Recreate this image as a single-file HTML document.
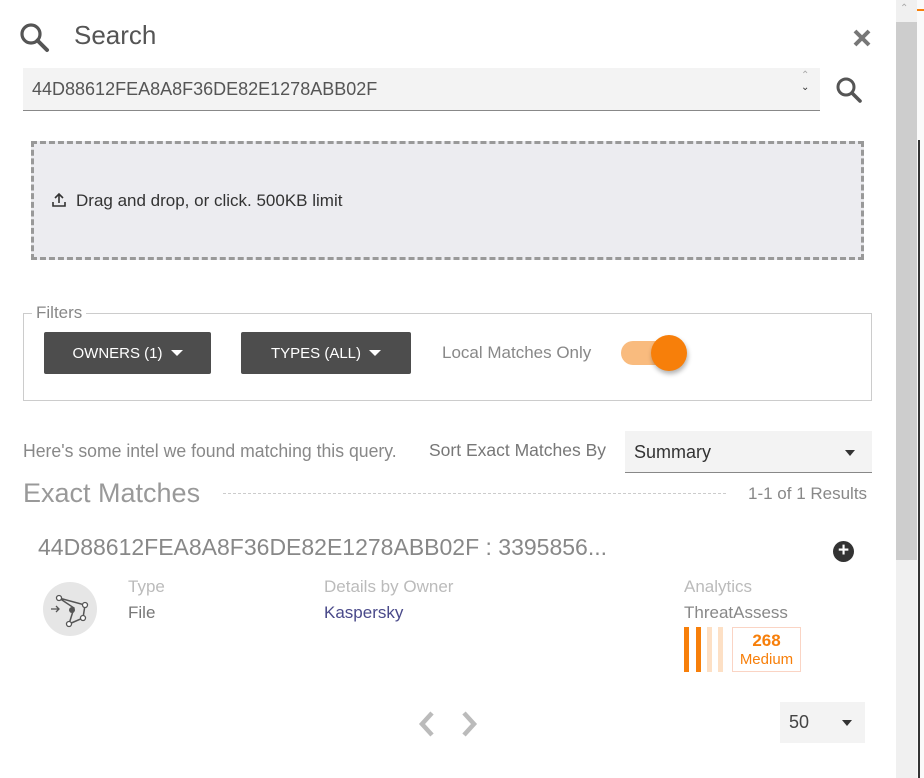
<!DOCTYPE html>
<html><head><meta charset="utf-8"><style>
*{box-sizing:border-box;margin:0;padding:0}
body{width:924px;height:778px;background:#fff;font-family:"Liberation Sans",sans-serif;position:relative;overflow:hidden;color:#555}
.a{position:absolute;white-space:nowrap}
.btn{position:absolute;background:#4d4d4d;color:#fff;font-size:15px;border-radius:2px;display:flex;align-items:center;justify-content:center;gap:8px}
.tri{width:0;height:0;border-left:6px solid transparent;border-right:6px solid transparent;border-top:6px solid currentColor;display:inline-block}
</style></head><body>
<svg class="a" style="left:18px;top:21px" width="34" height="32" viewBox="0 0 34 32"><circle cx="13" cy="13" r="9" fill="none" stroke="#555" stroke-width="3.2"/><line x1="19.5" y1="19.5" x2="29" y2="29" stroke="#555" stroke-width="4" stroke-linecap="round"/></svg>
<div class="a" style="left:74px;top:20px;font-size:26px;color:#555">Search</div>
<svg class="a" style="left:852px;top:28px" width="20" height="20" viewBox="0 0 20 20"><path d="M3 3L17 17M17 3L3 17" stroke="#777" stroke-width="4"/></svg>
<div class="a" style="left:23px;top:68px;width:797px;height:43px;background:#f3f3f3;border-bottom:1px solid #888"></div>
<div class="a" style="left:32px;top:79px;font-size:18px;color:#555">44D88612FEA8A8F36DE82E1278ABB02F</div>
<div class="a" style="left:801px;top:70px;font-size:10px;color:#aaa;line-height:12px">&#8963;<br><span style="color:#333">&#8964;</span></div>
<svg class="a" style="left:834px;top:75px" width="30" height="30" viewBox="0 0 30 30"><circle cx="12" cy="12" r="8" fill="none" stroke="#555" stroke-width="3"/><line x1="18" y1="18" x2="26" y2="26" stroke="#555" stroke-width="3.6" stroke-linecap="round"/></svg>
<div class="a" style="left:31px;top:141px;width:833px;height:119px;border:3px dashed #999;background:#ececf0"></div>
<svg class="a" style="left:51px;top:192px" width="16" height="16" viewBox="0 0 16 16"><path d="M8 11V2M4 6l4-4 4 4M2 10v4h12v-4" fill="none" stroke="#333" stroke-width="1.6"/></svg>
<div class="a" style="left:76px;top:191px;font-size:17px;color:#333">Drag and drop, or click. 500KB limit</div>
<div class="a" style="left:23px;top:313px;width:849px;height:88px;border:1px solid #ccc"></div>
<div class="a" style="left:32px;top:303px;padding:0 4px;background:#fff;font-size:17px;color:#888">Filters</div>
<div class="btn" style="left:44px;top:332px;width:167px;height:42px">OWNERS (1) <span class="tri"></span></div>
<div class="btn" style="left:241px;top:332px;width:170px;height:42px">TYPES (ALL) <span class="tri"></span></div>
<div class="a" style="left:442px;top:343px;font-size:17px;color:#888">Local Matches Only</div>
<div class="a" style="left:621px;top:341px;width:46px;height:24px;border-radius:12px;background:#f9bb7e"></div>
<div class="a" style="left:651px;top:335px;width:36px;height:36px;border-radius:50%;background:#f77f0a;box-shadow:1px 3px 5px rgba(0,0,0,.3)"></div>
<div class="a" style="left:23px;top:441px;font-size:18px;color:#888;transform:scaleX(0.98);transform-origin:left">Here's some intel we found matching this query.</div>
<div class="a" style="left:429px;top:440px;font-size:17.5px;color:#777">Sort Exact Matches By</div>
<div class="a" style="left:625px;top:431px;width:247px;height:42px;background:#f3f3f3;border-bottom:1px solid #888"></div>
<div class="a" style="left:634px;top:442px;font-size:18px;color:#333">Summary</div>
<span class="a tri" style="left:845px;top:450px;color:#333;border-left-width:5px;border-right-width:5px"></span>
<div class="a" style="left:23px;top:478px;font-size:27px;color:#999">Exact Matches</div>
<div class="a" style="left:223px;top:493px;width:503px;border-top:1px dashed #ccc"></div>
<div class="a" style="left:748px;top:484px;font-size:17px;color:#888">1-1 of 1 Results</div>
<div class="a" style="left:38px;top:534px;font-size:23px;color:#888">44D88612FEA8A8F36DE82E1278ABB02F : 3395856...</div>
<div class="a" style="left:833px;top:541px;width:21px;height:21px;border-radius:50%;background:#333;color:#fff;font-size:19px;font-weight:bold;line-height:20px;text-align:center">+</div>
<div class="a" style="left:43px;top:582px;width:54px;height:54px;border-radius:50%;background:#e6e6e6"></div>
<svg class="a" style="left:43px;top:582px" width="54" height="54" viewBox="0 0 54 54"><path d="M16 16L31 26L26 42M16 16L42 23L40 36L26 42" fill="none" stroke="#555" stroke-width="1.5"/><circle cx="16" cy="16" r="2.5" fill="#fff" stroke="#555" stroke-width="1.3"/><circle cx="42" cy="23" r="2.5" fill="#fff" stroke="#555" stroke-width="1.3"/><circle cx="40" cy="36" r="2.5" fill="#fff" stroke="#555" stroke-width="1.3"/><circle cx="26" cy="42" r="2.5" fill="#fff" stroke="#555" stroke-width="1.3"/><circle cx="29" cy="28" r="3" fill="#555"/><path d="M8 27h8M13 24l3 3-3 3" fill="none" stroke="#555" stroke-width="1.3"/></svg>
<div class="a" style="left:128px;top:577px;font-size:17px;color:#bbb">Type</div>
<div class="a" style="left:128px;top:603px;font-size:17px;color:#777">File</div>
<div class="a" style="left:324px;top:577px;font-size:17px;color:#bbb">Details by Owner</div>
<div class="a" style="left:324px;top:603px;font-size:17px;color:#4a4a8a">Kaspersky</div>
<div class="a" style="left:684px;top:577px;font-size:17px;color:#bbb">Analytics</div>
<div class="a" style="left:684px;top:603px;font-size:17px;color:#888">ThreatAssess</div>
<div class="a" style="left:684px;top:627px;width:5px;height:45px;background:#f77f0a"></div>
<div class="a" style="left:696px;top:627px;width:5px;height:45px;background:#f77f0a"></div>
<div class="a" style="left:707px;top:627px;width:5px;height:45px;background:#fde0c5"></div>
<div class="a" style="left:718px;top:627px;width:5px;height:45px;background:#fde0c5"></div>
<div class="a" style="left:732px;top:627px;width:69px;height:45px;border:1px solid #fad4c4;text-align:center;color:#f77f0a">
<div style="font-size:17px;font-weight:bold;line-height:20px;margin-top:3px">268</div><div style="font-size:15px;line-height:18px">Medium</div></div>
<svg class="a" style="left:414px;top:709px" width="70" height="30" viewBox="0 0 70 30"><path d="M18 4L8 15L18 26" fill="none" stroke="#bbb" stroke-width="4.5"/><path d="M50 4L60 15L50 26" fill="none" stroke="#bbb" stroke-width="4.5"/></svg>
<div class="a" style="left:780px;top:702px;width:85px;height:41px;background:#f3f3f3"></div>
<div class="a" style="left:789px;top:712px;font-size:18px;color:#444">50</div>
<span class="a tri" style="left:842px;top:720px;color:#333;border-left-width:5px;border-right-width:5px"></span>
<div class="a" style="left:896px;top:0;width:21px;height:778px;background:#f0f0f0"></div>
<div class="a" style="left:896px;top:22px;width:21px;height:538px;background:#cdcdcd"></div>
<div class="a" style="left:900px;top:3px;font-size:10px;color:#aaa">&#8963;</div>
<div class="a" style="left:917px;top:0;width:7px;height:778px;background:#fafafa"></div>
<div class="a" style="left:917px;top:9px;width:7px;height:2px;background:#f77f0a"></div>
<div class="a" style="left:918px;top:140px;width:2px;height:638px;background:#333"></div>
</body></html>
